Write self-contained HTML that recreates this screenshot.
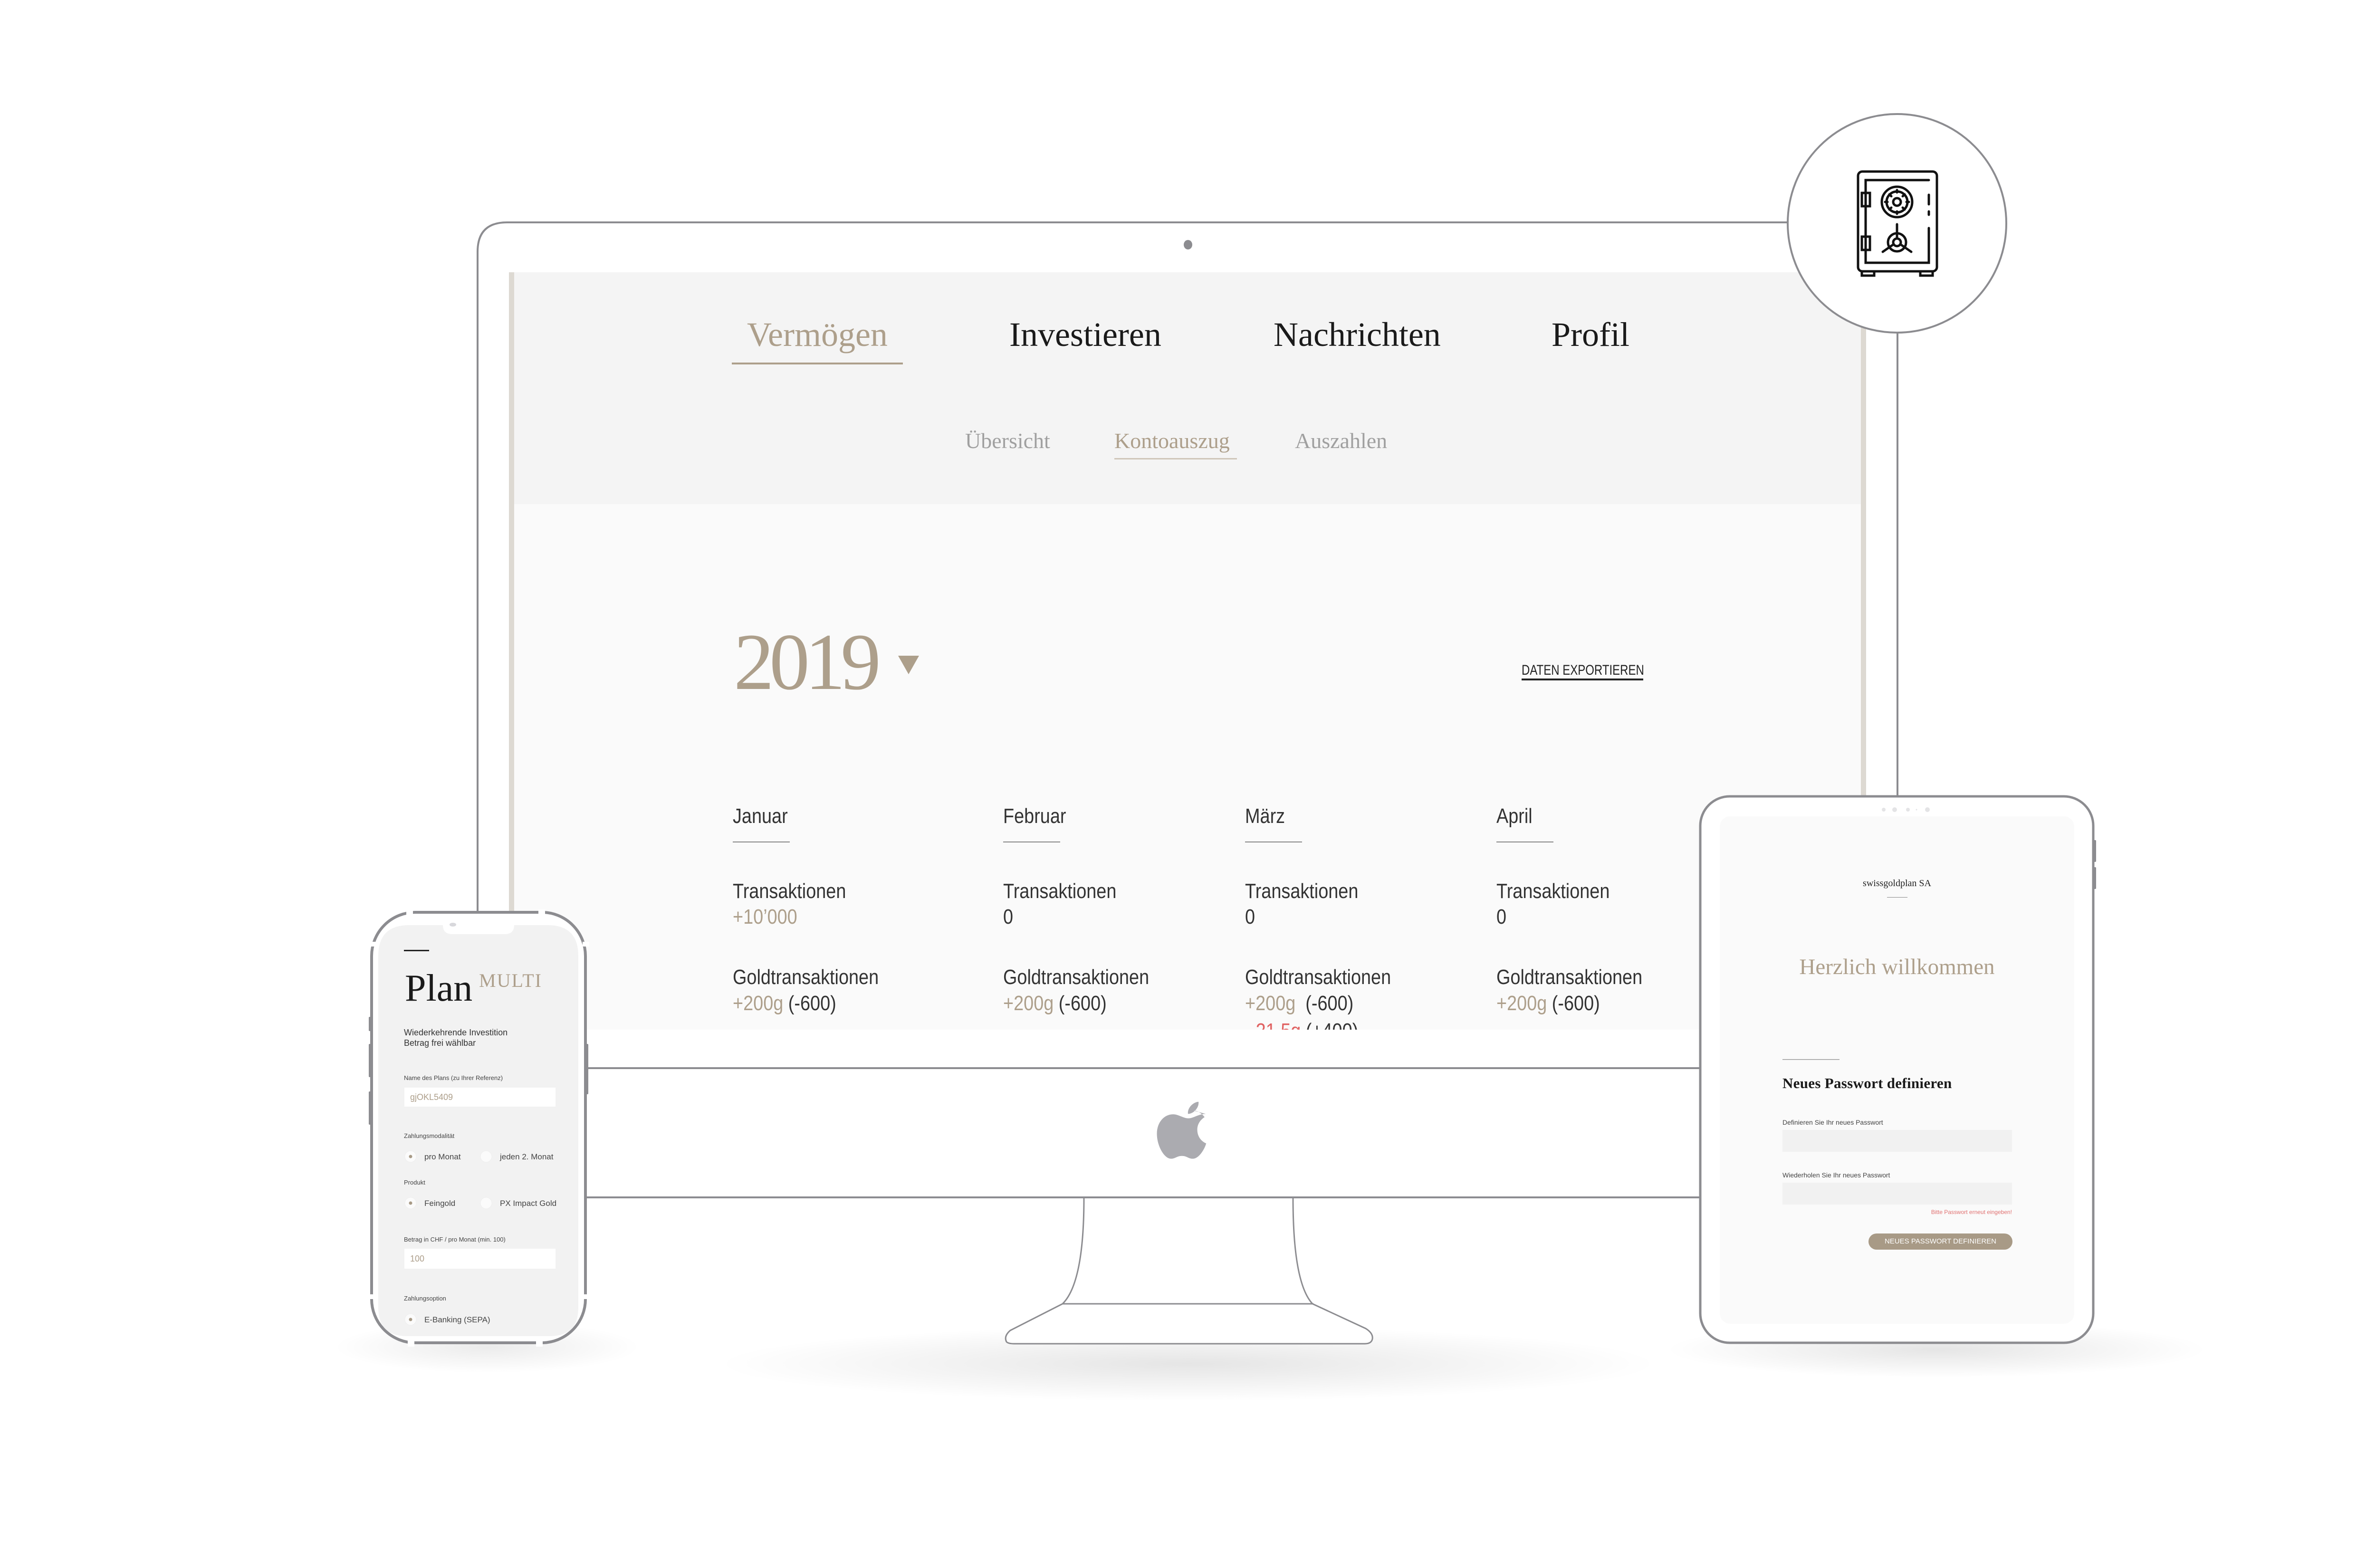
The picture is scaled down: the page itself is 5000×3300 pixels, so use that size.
<!DOCTYPE html>
<html><head><meta charset="utf-8">
<style>
*{margin:0;padding:0;box-sizing:border-box}
body{width:5000px;height:3300px;background:#fff;position:relative;overflow:hidden;font-family:"Liberation Sans",sans-serif}
.a{position:absolute;white-space:nowrap;line-height:1}
.serif{font-family:"Liberation Serif",serif}
.c{transform:scaleX(.86);transform-origin:left top}
.mo{font-size:44px;color:#333}
.gold{color:#ad9f8b}
</style></head><body>

<!-- shadows -->
<div class="a" style="left:1500px;top:2790px;width:2000px;height:160px;border-radius:50%;background:radial-gradient(ellipse at center,rgba(0,0,0,.10),rgba(0,0,0,0) 70%)"></div>
<div class="a" style="left:3500px;top:2780px;width:1150px;height:120px;border-radius:50%;background:radial-gradient(ellipse at center,rgba(0,0,0,.10),rgba(0,0,0,0) 70%)"></div>
<div class="a" style="left:700px;top:2780px;width:650px;height:110px;border-radius:50%;background:radial-gradient(ellipse at center,rgba(0,0,0,.08),rgba(0,0,0,0) 70%)"></div>

<!-- monitor outline -->
<svg class="a" style="left:0;top:0" width="5000" height="3300" viewBox="0 0 5000 3300">
  <g fill="none" stroke="#8c8c90" stroke-width="4">
    <path d="M1005 1920 V530 Q1005 468 1067 468 H3800"/>
    <path d="M3993 690 V1680"/>
    <path d="M1230 2248 H3580 M1230 2520 H3580"/>
  </g>
  <rect x="1071" y="573" width="2856" height="1594" fill="#fafafa"/>
  <rect x="1071" y="573" width="2856" height="488" fill="#f4f4f4"/>
  <rect x="1071" y="573" width="11" height="1594" fill="#ddd9d2"/>
  <rect x="3916" y="573" width="11" height="1594" fill="#ddd9d2"/>
  <ellipse cx="2500" cy="515" rx="9" ry="10" fill="#8c8c90"/>
  <path d="M2281 2522 Q2281 2700 2236 2744 L2126 2800 Q2112 2812 2118 2824 Q2122 2828 2134 2828 H2872 Q2886 2828 2888 2818 Q2890 2806 2874 2796 L2762 2744 Q2721 2700 2721 2522" fill="#fff" stroke="#8c8c90" stroke-width="3"/>
  <path d="M2236 2744 H2764" stroke="#8c8c90" stroke-width="3"/>
  <g transform="translate(2500 2380) scale(0.85) translate(-2478 -2390)">
  <path d="M2522 2348 c-18 0-30 11-43 11 c-13 0-24-10-38-10 c-22 0-40 20-40 48 c0 30 18 62 35 62 c10 0 15-7 27-7 c12 0 16 7 27 7 c16 0 30-26 33-38 c-14-6-22-19-22-34 c0-13 7-24 18-31 c-7-10-18-16-27-16 z M2504 2318 c2 14-12 30-26 30 c-2-14 12-29 26-30 z" fill="#ababb0"/>
  </g>
  <rect x="1540" y="763" width="360" height="4" fill="#ad9f8b"/>
  <rect x="2345" y="964" width="258" height="3" fill="#cfc6b9"/>
  <rect x="3202" y="1428" width="256" height="4" fill="#222"/>
  <path d="M1890 1380 H1934 L1912 1419 Z" fill="#ad9f8b"/>
  <g fill="#888"><rect x="1542" y="1771" width="120" height="2"/><rect x="2111" y="1771" width="120" height="2"/><rect x="2620" y="1771" width="120" height="2"/><rect x="3149" y="1771" width="120" height="2"/></g>
</svg>

<!-- nav -->
<div class="a serif" style="left:1572px;top:668px;font-size:72px;color:#ad9f8b">Vermögen</div>
<div class="a serif" style="left:2124px;top:668px;font-size:72px;color:#1a1a1a">Investieren</div>
<div class="a serif" style="left:2680px;top:668px;font-size:72px;color:#1a1a1a">Nachrichten</div>
<div class="a serif" style="left:3265px;top:668px;font-size:72px;color:#1a1a1a">Profil</div>
<div class="a serif" style="left:2031px;top:905px;font-size:46px;color:#a0a0a0">Übersicht</div>
<div class="a serif gold" style="left:2345px;top:905px;font-size:46px">Kontoauszug</div>
<div class="a serif" style="left:2725px;top:905px;font-size:46px;color:#a0a0a0">Auszahlen</div>
<div class="a serif gold" style="left:1544px;top:1308px;font-size:170px;letter-spacing:-10px">2019</div>
<div class="a" style="left:3202px;top:1396px;font-size:30px;color:#222;transform:scaleX(.8);transform-origin:left top">DATEN EXPORTIEREN</div>

<!-- months -->
<div class="a c mo" style="left:1542px;top:1696px">Januar</div>
<div class="a c mo" style="left:2111px;top:1696px">Februar</div>
<div class="a c mo" style="left:2620px;top:1696px">März</div>
<div class="a c mo" style="left:3149px;top:1696px">April</div>
<div class="a c mo" style="left:1542px;top:1854px">Transaktionen</div>
<div class="a c mo" style="left:2111px;top:1854px">Transaktionen</div>
<div class="a c mo" style="left:2620px;top:1854px">Transaktionen</div>
<div class="a c mo" style="left:3149px;top:1854px">Transaktionen</div>
<div class="a c mo" style="left:1542px;top:1908px"><span class="gold">+10’000</span></div>
<div class="a c mo" style="left:2111px;top:1908px">0</div>
<div class="a c mo" style="left:2620px;top:1908px">0</div>
<div class="a c mo" style="left:3149px;top:1908px">0</div>
<div class="a c mo" style="left:1542px;top:2035px">Goldtransaktionen</div>
<div class="a c mo" style="left:2111px;top:2035px">Goldtransaktionen</div>
<div class="a c mo" style="left:2620px;top:2035px">Goldtransaktionen</div>
<div class="a c mo" style="left:3149px;top:2035px">Goldtransaktionen</div>
<div class="a c mo" style="left:1542px;top:2090px"><span class="gold">+200g</span> (-600)</div>
<div class="a c mo" style="left:2111px;top:2090px"><span class="gold">+200g</span> (-600)</div>
<div class="a c mo" style="left:2620px;top:2090px"><span class="gold">+200g</span>&nbsp; (-600)</div>
<div class="a c mo" style="left:3149px;top:2090px"><span class="gold">+200g</span> (-600)</div>
<div class="a" style="left:2630px;top:2148px;height:19px;overflow:hidden"><div class="c mo" style="line-height:1"><span style="color:#e06060">-21.5g</span> (+400)</div></div>

<!-- phone -->
<svg class="a" style="left:760px;top:1900px" width="500" height="960" viewBox="760 1900 500 960">
  <rect x="782" y="1920" width="450" height="906" rx="92" fill="#fff" stroke="#8c8c90" stroke-width="6"/>
  <g fill="#fff"><rect x="855" y="1914" width="14" height="14"/><rect x="1133" y="1914" width="14" height="14"/><rect x="776" y="1982" width="14" height="10"/><rect x="1226" y="1982" width="14" height="10"/><rect x="776" y="2724" width="14" height="10"/><rect x="1226" y="2724" width="14" height="10"/><rect x="858" y="2820" width="14" height="14"/><rect x="1128" y="2820" width="14" height="14"/></g>
  <g fill="#8c8c90"><rect x="776" y="2140" width="7" height="30" rx="2"/><rect x="776" y="2197" width="7" height="70" rx="2"/><rect x="776" y="2297" width="7" height="70" rx="2"/><rect x="1231" y="2197" width="7" height="106" rx="2"/></g>
  <path d="M796 2012 Q796 1947 861 1947 H932 Q932 1966 952 1966 H1062 Q1082 1966 1082 1947 H1152 Q1217 1947 1217 2012 V2752 Q1217 2812 1157 2812 H856 Q796 2812 796 2752 Z" fill="#f2f2f2"/>
  <ellipse cx="953" cy="1946" rx="7" ry="4" fill="#d8d8dc"/>
  <rect x="850" y="1999" width="53" height="3" fill="#222"/>
  <rect x="851" y="2289" width="318" height="40" fill="#fff"/>
  <rect x="851" y="2628" width="318" height="42" fill="#fff"/>
  <g fill="#fbfbfb" stroke="#eee" stroke-width="1">
    <circle cx="864" cy="2434" r="12"/><circle cx="1023" cy="2434" r="12"/>
    <circle cx="864" cy="2532" r="12"/><circle cx="1023" cy="2532" r="12"/>
    <circle cx="864" cy="2777" r="12"/>
  </g>
  <g fill="#a89a86"><circle cx="864" cy="2434" r="3.5"/><circle cx="864" cy="2532" r="3.5"/><circle cx="864" cy="2777" r="3.5"/></g>
</svg>
<div class="a serif" style="left:852px;top:2040px;font-size:80px;color:#1a1a1a">Plan</div>
<div class="a serif gold" style="left:1008px;top:2044px;font-size:40px;letter-spacing:2px">MULTI</div>
<div class="a" style="left:850px;top:2163px;font-size:18px;color:#333;line-height:1.2">Wiederkehrende Investition<br>Betrag frei wählbar</div>
<div class="a" style="left:850px;top:2262px;font-size:13px;color:#444">Name des Plans (zu Ihrer Referenz)</div>
<div class="a gold" style="left:863px;top:2300px;font-size:18px">gjOKL5409</div>
<div class="a" style="left:850px;top:2384px;font-size:13px;color:#444">Zahlungsmodalität</div>
<div class="a" style="left:893px;top:2426px;font-size:17px;color:#444">pro Monat</div>
<div class="a" style="left:1052px;top:2426px;font-size:17px;color:#444">jeden 2. Monat</div>
<div class="a" style="left:850px;top:2482px;font-size:13px;color:#444">Produkt</div>
<div class="a" style="left:893px;top:2524px;font-size:17px;color:#444">Feingold</div>
<div class="a" style="left:1052px;top:2524px;font-size:17px;color:#444">PX Impact Gold</div>
<div class="a" style="left:850px;top:2602px;font-size:13px;color:#444">Betrag in CHF / pro Monat (min. 100)</div>
<div class="a gold" style="left:863px;top:2640px;font-size:18px">100</div>
<div class="a" style="left:850px;top:2726px;font-size:13px;color:#444">Zahlungsoption</div>
<div class="a" style="left:893px;top:2769px;font-size:17px;color:#444">E-Banking (SEPA)</div>

<!-- tablet -->
<svg class="a" style="left:3560px;top:1660px" width="870" height="1190" viewBox="3560 1660 870 1190">
  <rect x="3578" y="1676" width="827" height="1150" rx="62" fill="#fff" stroke="#8c8c90" stroke-width="5"/>
  <g fill="#8c8c90"><rect x="4405" y="1768" width="6" height="46" rx="2"/><rect x="4405" y="1825" width="6" height="46" rx="2"/></g>
  <rect x="3619" y="1718" width="746" height="1068" rx="22" fill="#fafafa"/>
  <g fill="#e4e4e6"><circle cx="3964" cy="1704" r="4"/><circle cx="3987" cy="1704" r="5"/><circle cx="4015" cy="1704" r="4"/><circle cx="4033" cy="1704" r="1.5"/><circle cx="4056" cy="1704" r="5"/></g>
  <rect x="3971" y="1888" width="43" height="1" fill="#888"/>
  <rect x="3751" y="2229" width="120" height="1.5" fill="#999"/>
  <rect x="3751" y="2378" width="483" height="46" fill="#f1f1f1"/>
  <rect x="3751" y="2489" width="483" height="46" fill="#f1f1f1"/>
  <rect x="3932" y="2596" width="303" height="34" rx="17" fill="#a89a86"/>
</svg>
<div class="a serif" style="left:3900px;top:1849px;width:184px;text-align:center;font-size:20px;color:#222">swissgoldplan SA</div>
<div class="a serif gold" style="left:3760px;top:2012px;width:464px;text-align:center;font-size:47px">Herzlich willkommen</div>
<div class="a serif" style="left:3751px;top:2264px;font-size:31px;color:#1a1a1a;font-weight:bold;letter-spacing:.3px">Neues Passwort definieren</div>
<div class="a" style="left:3751px;top:2355px;font-size:14px;color:#444">Definieren Sie Ihr neues Passwort</div>
<div class="a" style="left:3751px;top:2466px;font-size:14px;color:#444">Wiederholen Sie Ihr neues Passwort</div>
<div class="a" style="left:3934px;top:2545px;width:300px;text-align:right;font-size:12px;color:#e07070">Bitte Passwort erneut eingeben!</div>
<div class="a" style="left:3932px;top:2605px;width:303px;text-align:center;font-size:15px;color:#fff">NEUES PASSWORT DEFINIEREN</div>

<!-- safe icon circle -->
<svg class="a" style="left:3740px;top:220px" width="510" height="510" viewBox="3740 220 510 510">
  <circle cx="3992" cy="470" r="230" fill="#fff" stroke="#8c8c90" stroke-width="4"/>
  <g fill="none" stroke="#111" stroke-width="5" stroke-linecap="round">
    <rect x="3910" y="361" width="166" height="210" rx="9"/>
    <path d="M4059 379 H3926 V553 H4059 V480 M4059 410 V430 M4059 445 V452"/>
    <rect x="3918" y="406" width="17" height="28"/>
    <rect x="3918" y="498" width="17" height="28"/>
    <circle cx="3992" cy="425" r="32"/>
    <circle cx="3992" cy="425" r="22"/>
    <circle cx="3992" cy="425" r="8"/>
    <path d="M3992 400 v5 M3992 445 v5 M3967 425 h5 M4012 425 h5 M3976 409 l4 4 M4004 437 l4 4 M4008 409 l-4 4 M3976 441 l4 -4"/>
    <circle cx="3992" cy="510" r="19"/>
    <circle cx="3992" cy="510" r="8"/>
    <path d="M3992 502 V472"/>
    <path d="M3985 514 L3962 530 M3999 514 L4022 530"/>
    <path d="M3918 572 V580 H3944 V572 M4041 572 V580 H4067 V572"/>
  </g>
</svg>
</body></html>
